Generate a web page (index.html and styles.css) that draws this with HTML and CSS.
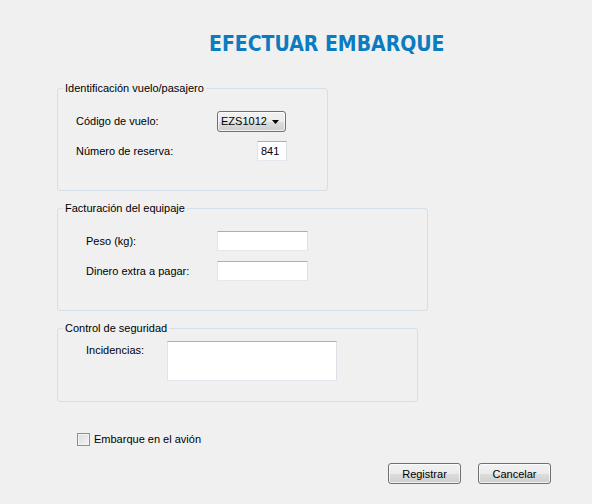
FILE: index.html
```html
<!DOCTYPE html>
<html lang="es">
<head>
<meta charset="utf-8">
<title>Efectuar embarque</title>
<link rel="stylesheet" href="styles.css">
</head>
<body>
<div class="window">
  <h1 class="title">EFECTUAR EMBARQUE</h1>

  <fieldset class="group g1">
    <legend>Identificación vuelo/pasajero</legend>
    <div class="rows rows-g1">
      <span class="label">Código de vuelo:</span>
      <div class="combo">
        <span class="combo-text">EZS1012</span>
        <svg class="combo-arrow" width="7" height="4" viewBox="0 0 7 4"><path d="M0 0H7L3.5 4Z" fill="#000"/></svg>
      </div>
      <span class="label">Número de reserva:</span>
      <div class="field field-small">841</div>
    </div>
  </fieldset>

  <fieldset class="group g2">
    <legend>Facturación del equipaje</legend>
    <div class="rows rows-g2">
      <span class="label">Peso (kg):</span>
      <div class="field field-mid"></div>
      <span class="label">Dinero extra a pagar:</span>
      <div class="field field-mid"></div>
    </div>
  </fieldset>

  <fieldset class="group g3">
    <legend>Control de seguridad</legend>
    <div class="rows rows-g3">
      <span class="label label-top">Incidencias:</span>
      <div class="field field-area"></div>
    </div>
  </fieldset>

  <div class="check">
    <span class="check-box"></span>
    <span class="check-label">Embarque en el avión</span>
  </div>

  <div class="actions">
    <button class="btn" type="button">Registrar</button>
    <button class="btn" type="button">Cancelar</button>
  </div>
</div>
</body>
</html>
```

FILE: styles.css
```css
html, body {
  margin: 0;
  padding: 0;
  background: #f0f0f0;
}

body {
  font-family: "Liberation Sans", Arial, sans-serif;
  font-size: 11px;
  line-height: 13px;
  color: #000;
}

.window {
  width: 592px;
  height: 504px;
  box-sizing: border-box;
  padding-top: 32px;
}

.title {
  margin: 0;
  padding-left: 209px;
  font-family: "DejaVu Sans Condensed", "DejaVu Sans", sans-serif;
  font-stretch: condensed;
  font-weight: bold;
  font-size: 21px;
  line-height: 24px;
  color: #0a7cbf;
}

.group {
  box-sizing: border-box;
  margin: 0 0 0 57px;
  padding: 0 0 0 5px;
  border: 1px solid #d5dfe5;
  border-radius: 3px;
  min-width: 0;
}

.group legend {
  padding: 0 2px;
  line-height: 13px;
}

.g1 {
  width: 271px;
  margin-top: 26px;
}

.g2 {
  width: 371px;
  margin-top: 11px;
}

.g3 {
  width: 361px;
  margin-top: 11px;
}

.rows {
  display: grid;
  align-items: center;
}

.rows-g1 {
  padding: 16px 0 29px 13px;
  grid-template-columns: 141px 70px;
  row-gap: 9px;
}

.rows-g2 {
  padding: 16px 0 29px 23px;
  grid-template-columns: 131px 91px;
  row-gap: 10px;
}

.rows-g3 {
  padding: 6px 0 20px 23px;
  grid-template-columns: 81px 170px;
  align-items: start;
}

.label-top {
  padding-top: 3px;
}

.combo {
  box-sizing: border-box;
  width: 69px;
  height: 21px;
  border: 1px solid #707070;
  border-radius: 3px;
  background: linear-gradient(#f2f2f2 0%, #ebebeb 50%, #dddddd 51%, #cfcfcf 100%);
  box-shadow: inset 0 0 0 1px rgba(255, 255, 255, 0.7);
  display: flex;
  align-items: center;
  justify-content: space-between;
  padding: 0 6px 0 3px;
}

.field {
  box-sizing: border-box;
  background: #fff;
  border: 1px solid #e3e9ef;
  border-top-color: #abadb3;
  border-left-color: #e2e3ea;
  border-right-color: #dbdfe6;
}

.field-small {
  width: 30px;
  height: 20px;
  justify-self: end;
  padding: 3px 0 0 3px;
}

.field-mid {
  width: 91px;
  height: 20px;
}

.field-area {
  width: 170px;
  height: 40px;
}

.check {
  display: flex;
  align-items: center;
  gap: 4px;
  margin: 31px 0 0 77px;
  height: 13px;
}

.check-box {
  box-sizing: border-box;
  width: 13px;
  height: 13px;
  border: 1px solid #8e8f8f;
  background: linear-gradient(135deg, #dcdcdc 0%, #f4f4f4 100%);
  box-shadow: inset 0 0 0 1px #f4f4f4;
}

.actions {
  display: flex;
  justify-content: flex-end;
  gap: 17px;
  padding-right: 41px;
  margin-top: 17px;
}

.btn {
  box-sizing: border-box;
  width: 73px;
  height: 21px;
  margin: 0;
  padding: 0;
  border: 1px solid #707070;
  border-radius: 3px;
  background: linear-gradient(#f2f2f2 0%, #ebebeb 50%, #dddddd 51%, #cfcfcf 100%);
  box-shadow: inset 0 0 0 1px rgba(255, 255, 255, 0.7);
  font-family: "Liberation Sans", Arial, sans-serif;
  font-size: 11px;
  color: #000;
}
```
